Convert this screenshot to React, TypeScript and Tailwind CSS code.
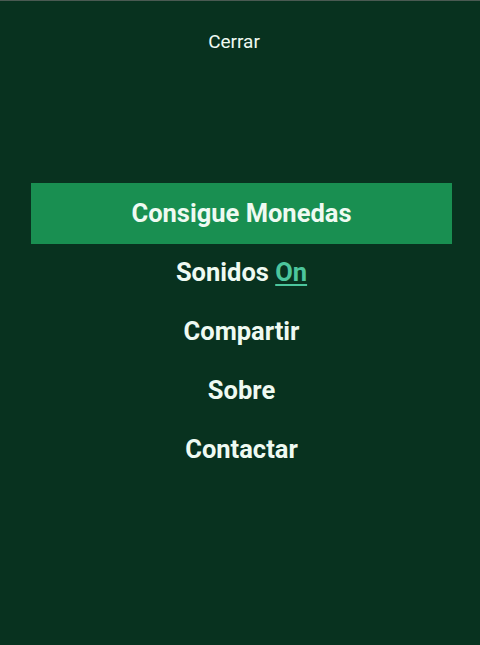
export default function App() {
  const items = ['Compartir', 'Sobre', 'Contactar']

  return (
    <div
      className="flex h-[645px] w-[480px] flex-col border-t border-[#4a5a52] bg-[#08321f] text-[#effaf2]"
      style={{ fontFamily: 'Roboto, "Liberation Sans", sans-serif' }}
    >
      <button className="mr-[12px] mt-[29px] self-center text-[19px] leading-[24px]">Cerrar</button>

      <nav className="mt-[129px] flex flex-col items-stretch pl-[3px]">
        <button className="ml-[28px] mr-[28px] h-[61px] bg-[#198f51] text-[25.5px] font-bold">Consigue Monedas</button>
        <button className="h-[59px] pb-[2px] text-[25.5px] font-bold">
          Sonidos <span className="text-[#4cc69d] underline decoration-2 underline-offset-[3px]">On</span>
        </button>
        {items.map((item) => (
          <button key={item} className="h-[59px] pb-[2px] text-[25.5px] font-bold">
            {item}
          </button>
        ))}
      </nav>
    </div>
  )
}
